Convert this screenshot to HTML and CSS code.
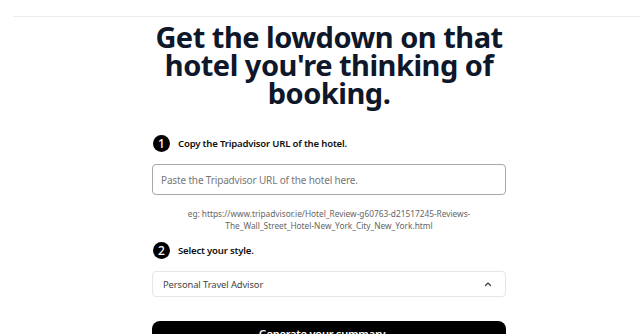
FILE: index.html
```html
<!DOCTYPE html>
<html lang="en">
<head>
<meta charset="utf-8">
<title>Hotel lowdown</title>
<link rel="stylesheet" href="styles.css">
</head>
<body>
<header class="topbar"></header>
<main class="main">
  <h1 class="title">Get the lowdown on that hotel you're thinking of booking.</h1>
  <div class="step">
    <span class="num">1</span>
    <span class="label">Copy the Tripadvisor URL of the hotel.</span>
  </div>
  <input class="url" type="text" placeholder="Paste the Tripadvisor URL of the hotel here.">
  <p class="example">eg: https://www.tripadvisor.ie/Hotel_Review-g60763-d21517245-Reviews-<br>The_Wall_Street_Hotel-New_York_City_New_York.html</p>
  <div class="step step2">
    <span class="num">2</span>
    <span class="label">Select your style.</span>
  </div>
  <div class="select">
    <span>Personal Travel Advisor</span>
    <svg class="chev" width="10" height="10" viewBox="0 0 10 10"><path d="M2.5 6.5 L5 4 L7.5 6.5" fill="none" stroke="#444" stroke-width="1.3" stroke-linecap="round" stroke-linejoin="round"/></svg>
  </div>
  <button class="go">Generate your summary</button>
</main>
</body>
</html>
```
FILE: styles.css
```css
html, body { margin: 0; padding: 0; background: #fff; }
body { font-family: "Noto Sans", "Open Sans", sans-serif; color: #111; overflow: hidden; height: 334px; }
.topbar { height: 16px; margin-left: 13px; border-bottom: 1px solid #ececec; }
.main { width: 354px; margin-left: 152px; display: flex; flex-direction: column; }
.title { margin: 6px -12px 0; font-size: 29px; line-height: 28px; font-weight: 700; text-align: center; color: #0f172a; letter-spacing: -0.5px; }
.step { display: flex; align-items: center; gap: 8px; margin-top: 28px; padding-left: 1px; }
.step2 { margin-top: 10px; }
.num { width: 17px; height: 17px; border-radius: 50%; background: #000; color: #fff; font-size: 12px; line-height: 17px; text-align: center; font-weight: 500; }
.label { font-size: 9.6px; font-weight: 600; color: #111; letter-spacing: -0.2px; }
.url { margin-top: 12px; height: 31px; box-sizing: border-box; border: 1px solid #a8a8a8; border-radius: 4px; padding: 0 8px; font-family: inherit; font-size: 10px; letter-spacing: -0.15px; outline: none; }
.url::placeholder { color: #777; }
.example { margin: 13px 0 0; text-align: center; font-size: 8.3px; line-height: 12px; color: #666; }
.select { margin-top: 12px; height: 26px; box-sizing: border-box; border: 1px solid #e6e6e6; border-radius: 4px; padding: 0 10px; display: flex; align-items: center; justify-content: space-between; font-size: 9.4px; letter-spacing: -0.1px; color: #444; }
.chev { display: block; margin-right: 2px; }
.go { margin-top: 24px; padding: 5px 14px 17px 0; border: none; border-radius: 8px; background: #000; color: #fff; font-family: inherit; font-size: 11px; line-height: 16px; font-weight: 600; letter-spacing: -0.2px; }
```
